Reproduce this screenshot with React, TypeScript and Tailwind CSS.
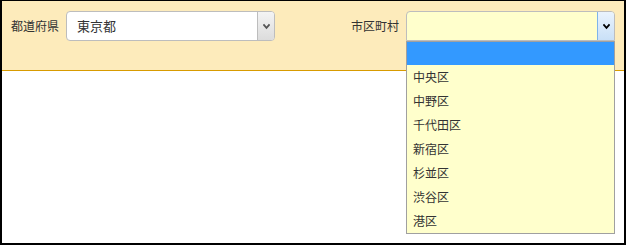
import React from 'react';

const wards = ['中央区', '中野区', '千代田区', '新宿区', '杉並区', '渋谷区', '港区'];

function Chevron({ className }: { className?: string }) {
  return (
    <svg viewBox="0 0 10 8" className={className} width="9" height="7">
      <path d="M1.5 1.5 L5 5.5 L8.5 1.5" fill="none" stroke="currentColor" strokeWidth="2" />
    </svg>
  );
}

export default function App() {
  return (
    <div
      className="w-[626px] h-[245px] bg-white border-t border-l-2 border-r-2 border-b-2 border-black text-[12px] text-[#333]"
      style={{ fontFamily: '"Noto Sans CJK JP", "Noto Sans", sans-serif' }}
    >
      <div className="h-[70px] bg-[#fdebbb] border-b border-[#d89b00] flex items-start pt-[10px]">
        <div className="flex items-center pl-[9px]">
          <span className="w-[55px] leading-[30px] whitespace-nowrap">都道府県</span>
          <div className="w-[209px] h-[30px] bg-white border border-[#bdbdbd] rounded-[4px] flex items-stretch overflow-hidden">
            <span className="flex-1 pl-[10px] leading-[28px] text-[13px]">東京都</span>
            <div className="w-[17px] bg-gradient-to-b from-[#f4f4f4] to-[#dcdcdc] border-l border-[#bdbdbd] flex items-center justify-center text-[#555]">
              <Chevron />
            </div>
          </div>
        </div>
        <div className="flex items-center ml-auto pr-[9px]">
          <span className="leading-[30px] whitespace-nowrap pr-[7px]">市区町村</span>
          <div className="relative">
            <div className="w-[209px] h-[30px] bg-[#ffffcc] border border-[#bdbdbd] rounded-t-[4px] flex items-stretch overflow-hidden">
              <span className="flex-1" />
              <div className="w-[17px] bg-gradient-to-b from-[#eaf3fd] to-[#c9e0f7] border-l border-[#7eb4ea] flex items-center justify-center text-black">
                <Chevron />
              </div>
            </div>
            <ul className="absolute left-0 top-[30px] w-[209px] bg-[#ffffcc] border border-[#a0a0a0] z-10">
              <li className="h-[23px] bg-[#3399ff]" />
              {wards.map((w) => (
                <li key={w} className="h-[24px] leading-[24px] pl-[6px] whitespace-nowrap">
                  {w}
                </li>
              ))}
            </ul>
          </div>
        </div>
      </div>
    </div>
  );
}
